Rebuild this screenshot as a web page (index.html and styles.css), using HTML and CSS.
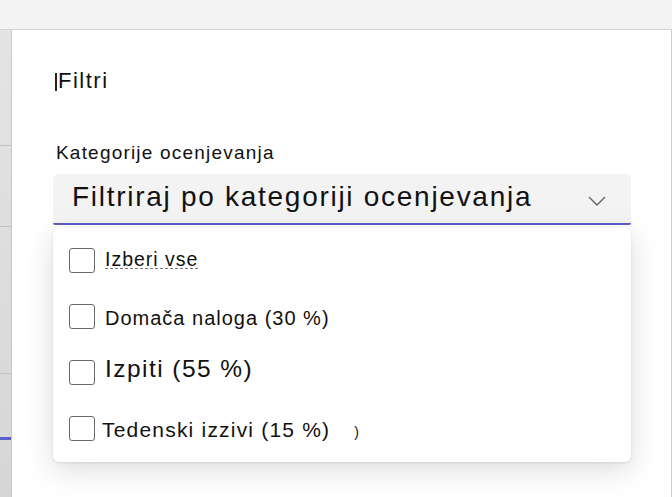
FILE: index.html
```html
<!DOCTYPE html>
<html lang="sl">
<head>
<meta charset="UTF-8">
<title>Filtri</title>
<link rel="stylesheet" href="styles.css">
</head>
<body>
<div class="topbar"></div>
<div class="stage">
  <aside class="rail">
    <span class="rail-line" style="top:115px"></span>
    <span class="rail-line" style="top:196px"></span>
    <span class="rail-line" style="top:343px"></span>
    <span class="rail-mark" style="top:407px"></span>
  </aside>

  <section class="panel">
    <h2 class="title">Filtri</h2>

    <label class="field-label">Kategorije ocenjevanja</label>
    <button class="select">
      <span>Filtriraj po kategoriji ocenjevanja</span>
      <svg class="chev" width="18" height="10" viewBox="0 0 18 10"><path d="M1 1 L9 9 L17 1" fill="none" stroke="#616161" stroke-width="1.3"/></svg>
    </button>

    <ul class="menu">
      <li class="opt opt-all"><span class="box"></span><span class="txt">Izberi vse</span></li>
      <li class="opt opt-hw"><span class="box"></span><span class="txt">Domača naloga (30 %)</span></li>
      <li class="opt opt-ex"><span class="box"></span><span class="txt">Izpiti (55 %)</span></li>
      <li class="opt opt-wk"><span class="box"></span><span class="txt">Tedenski izzivi (15 %)</span><span class="stray">)</span></li>
    </ul>
  </section>
  <div class="edge"></div>
</div>
</body>
</html>
```

FILE: styles.css
```css
*{box-sizing:border-box;margin:0;padding:0}
html,body{height:100%}
body{font-family:"Liberation Sans",Arial,sans-serif;color:#111;background:#f3f3f3;display:flex;flex-direction:column;overflow:hidden}

.topbar{height:30px;background:#f3f3f3;border-bottom:1px solid #d4d4d4;flex:none}
.stage{flex:1;display:flex;min-height:0}

/* left rail behind the panel */
.rail{width:11px;flex:none;position:relative;background:linear-gradient(#e4e4e4,#d6d6d6)}
.rail-line{position:absolute;left:0;right:0;height:1px;background:#c2c2c2}
.rail-mark{position:absolute;left:0;right:0;height:3px;background:#5b5fc7}

.panel{flex:1;background:#fff;border-left:1px solid #c8c8c8;border-right:1px solid #cfcfcf;padding:38px 40px 0 41px}
.edge{width:1px;background:#4fa6b8;flex:none}

.title{position:relative;font-size:22px;font-weight:400;line-height:26px;margin-left:5px;letter-spacing:1.5px}
.title::before{content:"";position:absolute;left:-3px;top:5px;width:2px;height:18px;background:#222}
.field-label{display:block;font-size:19px;line-height:22px;margin:48px 0 0 3px;letter-spacing:1.2px}

.select{display:flex;align-items:center;justify-content:space-between;width:578px;height:51px;margin-top:10px;
  background:#f3f3f3;border:0;border-bottom:2px solid #5b5fc7;border-radius:5px 5px 2px 2px;
  padding:0 25px 4px 19px;font:inherit;font-size:28px;color:#111;letter-spacing:1.72px;text-align:left}
.chev{margin-top:8px}

.menu{list-style:none;width:578px;height:234px;margin-top:3px;background:#fff;border-radius:6px;
  box-shadow:0 8px 30px rgba(0,0,0,.14),0 1px 3px rgba(0,0,0,.1);padding:20px 0 0 16px}
.opt{display:flex;align-items:center;height:25px}
.box{width:26px;height:25px;border:1px solid #6b6b6b;border-radius:3px;flex:none}
.opt-all .txt{font-size:19.5px;margin:-3px 0 0 10px;letter-spacing:1px;text-decoration:underline dashed #777 1px;text-underline-offset:2px}
.opt-hw{margin-top:31px}
.opt-hw .txt{font-size:20px;margin:3px 0 0 10px;letter-spacing:1px}
.opt-ex{margin-top:31px}
.opt-ex .txt{font-size:24.5px;margin:-7px 0 0 10px;letter-spacing:1.45px}
.opt-wk{margin-top:31px}
.opt-wk .txt{font-size:21px;margin:2px 0 0 7px;letter-spacing:1.2px}
.stray{font-size:14px;margin:6px 0 0 24px}
```
